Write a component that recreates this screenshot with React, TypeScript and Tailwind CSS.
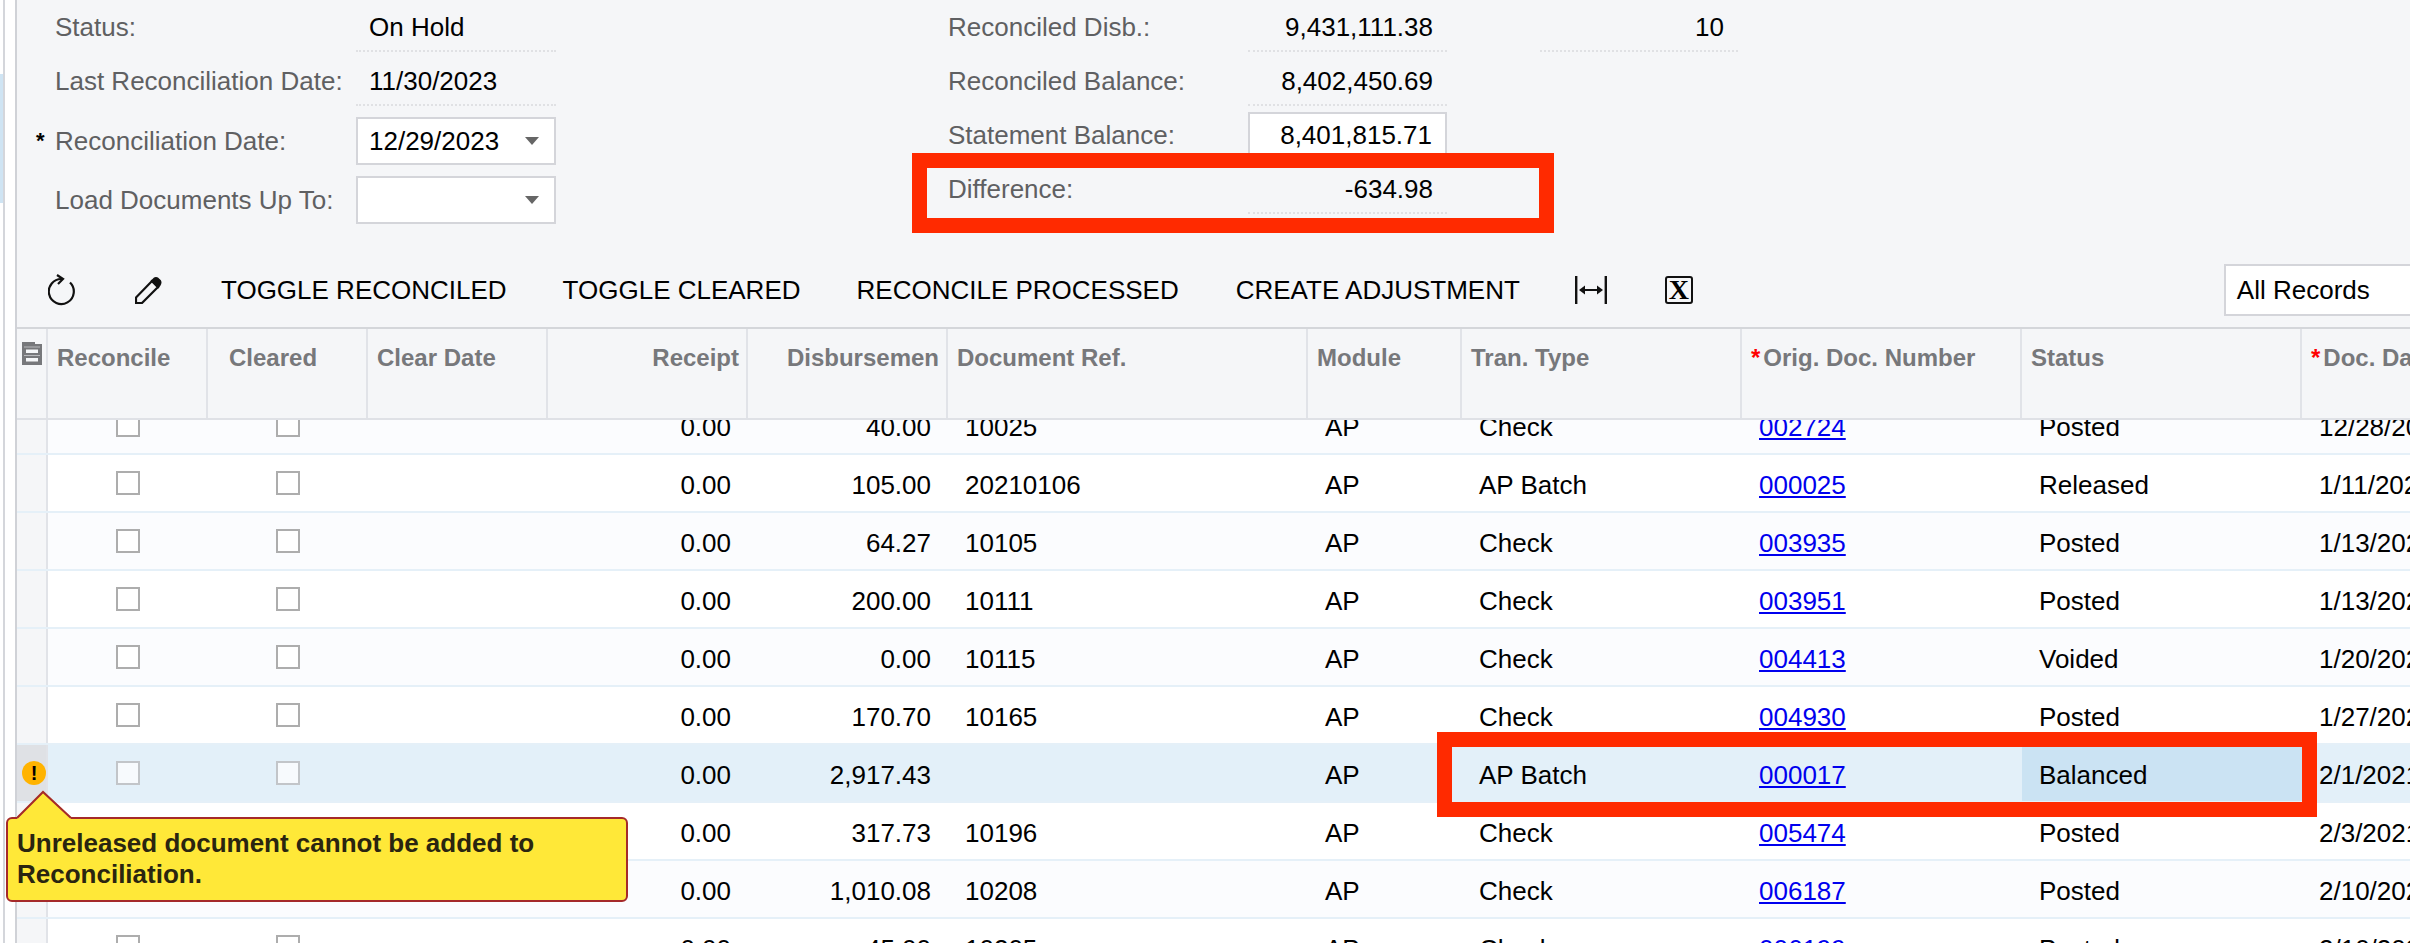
import React from "react";

interface Row {
  receipt: string;
  disb: string;
  ref: string;
  tran: string;
  doc: string;
  status: string;
  date: string;
  active?: boolean;
}

const rows: Row[] = [
  { receipt: "0.00", disb: "40.00", ref: "10025", tran: "Check", doc: "002724", status: "Posted", date: "12/28/2020" },
  { receipt: "0.00", disb: "105.00", ref: "20210106", tran: "AP Batch", doc: "000025", status: "Released", date: "1/11/2021" },
  { receipt: "0.00", disb: "64.27", ref: "10105", tran: "Check", doc: "003935", status: "Posted", date: "1/13/2021" },
  { receipt: "0.00", disb: "200.00", ref: "10111", tran: "Check", doc: "003951", status: "Posted", date: "1/13/2021" },
  { receipt: "0.00", disb: "0.00", ref: "10115", tran: "Check", doc: "004413", status: "Voided", date: "1/20/2021" },
  { receipt: "0.00", disb: "170.70", ref: "10165", tran: "Check", doc: "004930", status: "Posted", date: "1/27/2021" },
  { receipt: "0.00", disb: "2,917.43", ref: "", tran: "AP Batch", doc: "000017", status: "Balanced", date: "2/1/2021", active: true },
  { receipt: "0.00", disb: "317.73", ref: "10196", tran: "Check", doc: "005474", status: "Posted", date: "2/3/2021" },
  { receipt: "0.00", disb: "1,010.08", ref: "10208", tran: "Check", doc: "006187", status: "Posted", date: "2/10/2021" },
  { receipt: "0.00", disb: "45.00", ref: "10205", tran: "Check", doc: "006199", status: "Posted", date: "2/10/2021" },
];

const gridCols =
  "grid grid-cols-[31px_160px_160px_180px_200px_200px_360px_154px_280px_280px_280px_300px]";

const Caret = () => (
  <svg width="14" height="8" viewBox="0 0 14 8" className="shrink-0">
    <polygon points="0,0 14,0 7,8" fill="#666666" />
  </svg>
);

const Label = ({ text, star }: { text: string; star?: boolean }) => (
  <div className="flex items-center whitespace-nowrap">
    <span className="w-[19px] text-black text-[22px] font-bold leading-none">{star ? "*" : ""}</span>
    <span className="text-[#5f6062]">{text}</span>
  </div>
);

const ReadOnly = ({ value, right }: { value: string; right?: boolean }) => (
  <div
    className={`w-full h-[52px] pt-[5px] flex items-center border-b-2 border-dotted border-[#e0e1e4] text-black ${
      right ? "justify-end pr-[14px]" : "pl-[13px]"
    }`}
  >
    {value}
  </div>
);

const Select = ({ value }: { value: string }) => (
  <div className="w-[200px] h-[48px] bg-white border-2 border-[#d4d5da] flex items-center justify-between pl-[11px] pr-[15px] text-black">
    <span>{value}</span>
    <Caret />
  </div>
);

const RefreshIcon = () => (
  <svg width="28" height="32" viewBox="0 0 28 32" fill="none" stroke="#111111" strokeWidth="2.2" className="shrink-0">
    <path d="M22 8.500A12.500 12.500 0 1 1 14 5" />
    <path d="M9 1l6 4-5 5" />
  </svg>
);

const PencilIcon = () => (
  <svg width="27" height="27" viewBox="0 0 27 27" fill="none" stroke="#111111" strokeWidth="2.200" className="shrink-0">
    <path d="M1 26v-5.500L17 4l6 6L7 26z" />
    <path d="M17 4l2-2q2-1.500 4 0l2 2q1 2-.5 4L23 10z" fill="#111111" />
  </svg>
);

const FitIcon = () => (
  <svg width="32" height="28" viewBox="0 0 32 28" className="shrink-0">
    <rect x="0" y="0" width="2.400" height="28" fill="#111111" />
    <rect x="29.600" y="0" width="2.400" height="28" fill="#111111" />
    <rect x="8" y="13" width="16" height="2" fill="#111111" />
    <polygon points="4,14 10,9.500 10,18.500" fill="#111111" />
    <polygon points="28,14 22,9.500 22,18.500" fill="#111111" />
  </svg>
);

const CabinetIcon = () => (
  <svg width="20" height="23" viewBox="0 0 20 23">
    <path d="M0 0h13v2h7v21H0z" fill="#77787b" />
    <rect x="2" y="4.500" width="16" height="1" fill="#b9babd" />
    <rect x="2" y="13" width="16" height="1" fill="#b9babd" />
    <rect x="4" y="7.500" width="12" height="3.500" fill="#f5f6f8" />
    <rect x="4" y="16" width="12" height="3.500" fill="#f5f6f8" />
  </svg>
);

const HeaderCell = ({ children, right }: { children?: React.ReactNode; right?: boolean }) => (
  <div
    className={`border-r-2 border-[#e1e3e8] pt-[14px] leading-[30px] text-[24px] font-bold text-[#77787b] whitespace-nowrap overflow-hidden ${
      right ? "text-right pr-[7px]" : "pl-[9px]"
    }`}
  >
    {children}
  </div>
);

const Star = () => <span className="text-[#ff0000] mr-[3px]">*</span>;

const Check = ({ active }: { active?: boolean }) => (
  <div className="flex items-center justify-center">
    <div
      className={`w-[24px] h-[24px] border-2 ${
        active ? "border-[#c2c5c9] bg-[#f7fafd]" : "border-[#adadad] bg-white"
      }`}
    />
  </div>
);

const Cell = ({ children, right, className }: { children?: React.ReactNode; right?: boolean; className?: string }) => (
  <div className={`flex items-center pt-[4px] whitespace-nowrap text-black ${right ? "justify-end pr-[17px]" : "pl-[17px]"} ${className ?? ""}`}>
    {children}
  </div>
);

const GridRow = ({ row, tinted }: { row: Row; tinted: boolean }) => (
  <div
    className={`${gridCols} h-[58px] border-b-2 border-[#e5f0f8] ${
      row.active ? "bg-[#e3f0f9]" : tinted ? "bg-[#fbfcfe]" : "bg-white"
    }`}
  >
    <div className={`flex items-center border-r-2 border-[#e1e3e8] ${row.active ? "bg-[#dfe1e5]" : "bg-[#f5f6f8]"}`}>
      {row.active && (
        <div className="ml-[5px] w-[24px] h-[24px] rounded-full bg-[#ffb300] flex items-center justify-center text-[20px] font-bold text-black leading-none">
          !
        </div>
      )}
    </div>
    <Check active={row.active} />
    <Check active={row.active} />
    <div />
    <Cell right>{row.receipt}</Cell>
    <Cell right>{row.disb}</Cell>
    <Cell>{row.ref}</Cell>
    <Cell>AP</Cell>
    <Cell>{row.tran}</Cell>
    <Cell>
      <a className="text-[#0000ee] underline decoration-2 underline-offset-2">{row.doc}</a>
    </Cell>
    <Cell className={row.active ? "bg-[#cbe3f3]" : ""}>{row.status}</Cell>
    <Cell>{row.date}</Cell>
  </div>
);

export default function App() {
  return (
    <div className="relative h-[943px] w-[2410px] overflow-hidden flex bg-white text-[26px] [font-family:'Liberation_Sans',Arial,sans-serif]">
      {/* left gutter */}
      <div className="w-[17px] shrink-0 flex">
        <div className="w-[3px] pt-[74px]">
          <div className="h-[129px] bg-[#cfe4f3]" />
        </div>
        <div className="w-[2px] bg-[#d4d6db]" />
        <div className="w-[10px] bg-white" />
        <div className="w-[2px] bg-[#d0d2d7]" />
      </div>

      <div className="flex-1 min-w-0 flex flex-col bg-[#f5f6f8] overflow-hidden">
        {/* summary form */}
        <div className="h-[253px] shrink-0 flex pl-[19px]">
          <div className="w-[520px] shrink-0 grid grid-cols-[320px_200px] auto-rows-min">
            <div className="h-[54px] flex items-center"><Label text="Status:" /></div>
            <ReadOnly value="On Hold" />
            <div className="h-[54px] flex items-center"><Label text="Last Reconciliation Date:" /></div>
            <ReadOnly value="11/30/2023" />
            <div className="h-[57px] pt-[9px] flex items-center"><Label text="Reconciliation Date:" star /></div>
            <div className="pt-[9px]"><Select value="12/29/2023" /></div>
            <div className="h-[59px] pt-[11px] flex items-center"><Label text="Load Documents Up To:" /></div>
            <div className="pt-[11px]"><Select value={"\u00a0"} /></div>
          </div>
          <div className="ml-[392px] w-[499px] shrink-0 grid grid-cols-[300px_199px] auto-rows-min">
            <div className="h-[54px] flex items-center text-[#5f6062]">Reconciled Disb.:</div>
            <ReadOnly value="9,431,111.38" right />
            <div className="h-[54px] flex items-center text-[#5f6062]">Reconciled Balance:</div>
            <ReadOnly value="8,402,450.69" right />
            <div className="h-[54px] flex items-center text-[#5f6062]">Statement Balance:</div>
            <div className="pt-[4px]">
              <div className="h-[46px] bg-white border-2 border-[#d4d5da] flex items-center justify-end pr-[13px] text-black">
                8,401,815.71
              </div>
            </div>
            <div className="h-[54px] flex items-center text-[#5f6062]">Difference:</div>
            <ReadOnly value="-634.98" right />
          </div>
          <div className="ml-[93px] w-[198px] shrink-0">
            <ReadOnly value="10" right />
          </div>
        </div>

        {/* toolbar */}
        <div className="h-[74px] shrink-0 flex items-center text-black whitespace-nowrap">
          <div className="ml-[31px]"><RefreshIcon /></div>
          <div className="ml-[59px]"><PencilIcon /></div>
          <span className="ml-[59px]">TOGGLE RECONCILED</span>
          <span className="ml-[56px]">TOGGLE CLEARED</span>
          <span className="ml-[56px]">RECONCILE PROCESSED</span>
          <span className="ml-[57px]">CREATE ADJUSTMENT</span>
          <div className="ml-[55px]"><FitIcon /></div>
          <div className="ml-[58px] w-[28px] h-[28px] shrink-0 rounded-[3px] border-2 border-[#111111] flex items-center justify-center text-[28px] font-bold leading-none [font-family:'Liberation_Serif',serif]">
            X
          </div>
          <div className="ml-[531px] w-[260px] h-[52px] shrink-0 bg-white border-2 border-[#d4d5da] flex items-center pl-[11px]">
            All Records
          </div>
        </div>

        {/* grid header */}
        <div className={`${gridCols} relative z-10 shrink-0 h-[93px] bg-[#f5f6f8] border-t-2 border-t-[#d4d6da] border-b-2 border-b-[#dfe1e6]`}>
          <div className="border-r-2 border-[#e1e3e8] pl-[5px] pt-[13px]"><CabinetIcon /></div>
          <HeaderCell>Reconcile</HeaderCell>
          <div className="border-r-2 border-[#e1e3e8] pt-[14px] pl-[21px] leading-[30px] text-[24px] font-bold text-[#77787b]">Cleared</div>
          <HeaderCell>Clear Date</HeaderCell>
          <HeaderCell right>Receipt</HeaderCell>
          <HeaderCell right>Disbursemen</HeaderCell>
          <HeaderCell>Document Ref.</HeaderCell>
          <HeaderCell>Module</HeaderCell>
          <HeaderCell>Tran. Type</HeaderCell>
          <HeaderCell><Star />Orig. Doc. Number</HeaderCell>
          <HeaderCell>Status</HeaderCell>
          <HeaderCell><Star />Doc. Date</HeaderCell>
        </div>

        {/* grid body, first row sits partly under the header */}
        <div className="-mt-[23px] flex flex-col">
          {rows.map((row, i) => (
            <GridRow key={row.doc} row={row} tinted={i % 2 === 0} />
          ))}
        </div>
      </div>

      {/* callout boxes drawn over the screen */}
      <div className="absolute left-[912px] top-[153px] w-[642px] h-[80px] border-[15px] border-[#ff2a00]" />
      <div className="absolute left-[1437px] top-[732px] w-[880px] h-[85px] border-[15px] border-[#ff2a00]" />

      {/* validation tooltip */}
      <div className="absolute left-[6px] top-[817px] w-[622px] h-[85px] rounded-[6px] bg-[#ffe838] border-2 border-[#a52a2a] pl-[9px] pt-[9px] text-[26px] font-bold leading-[31px] text-[#2a2510]">
        Unreleased document cannot be added to
        <br />
        Reconciliation.
      </div>
      <svg className="absolute left-[17px] top-[790px]" width="56" height="30" viewBox="0 0 56 30">
        <polygon points="0,27 26,1 54,27 54,30 0,30" fill="#ffe838" />
        <polyline points="0,28 26,2 54,28" fill="none" stroke="#a52a2a" strokeWidth="2" />
      </svg>
    </div>
  );
}
